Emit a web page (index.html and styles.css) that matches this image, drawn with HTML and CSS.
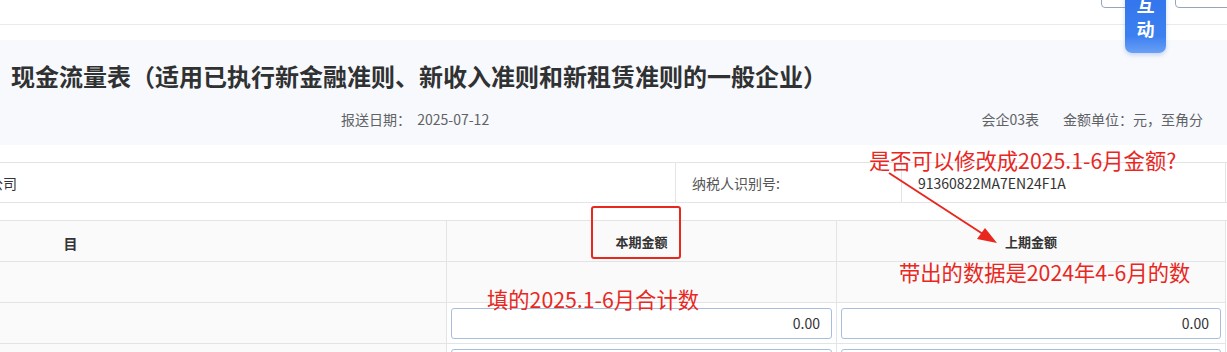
FILE: index.html
```html
<!DOCTYPE html>
<html lang="zh-CN">
<head>
  <meta charset="UTF-8">
  <title>现金流量表</title>
  <link rel="stylesheet" href="styles.css">
</head>
<body>
  <!-- 顶部工具栏 -->
  <div class="topbar">
    <div class="top-btn btn-a"></div>
    <div class="top-btn btn-b"></div>
    <div class="hudong">互<br>动</div>
  </div>

  <!-- 表头 -->
  <div class="report-head">
    <h1 class="report-title">现金流量表（适用已执行新金融准则、新收入准则和新租赁准则的一般企业）</h1>
    <div class="report-meta">
      <span class="send-date">报送日期：&nbsp;&nbsp;2025-07-12</span>
      <span class="form-no">会企03表</span>
      <span class="unit">金额单位：元，至角分</span>
    </div>
  </div>

  <div class="sheet">
    <!-- 纳税人信息 -->
    <div class="info-row">
      <div class="info-cell info-label1">纳税人名称：</div>
      <div class="info-cell info-name">有限公司</div>
      <div class="info-cell info-label2">纳税人识别号:</div>
      <div class="info-cell info-code">91360822MA7EN24F1A</div>
    </div>

    <!-- 主表 -->
    <div class="grid">
      <div class="cell head c1"><span>项</span><span>目</span></div>
      <div class="cell head c2">本期金额</div>
      <div class="cell head c3">上期金额</div>

      <div class="cell c1 shade"></div>
      <div class="cell c2 shade"></div>
      <div class="cell c3 shade"></div>

      <div class="cell c1 shade"></div>
      <div class="cell c2"><div class="amount">0.00</div></div>
      <div class="cell c3"><div class="amount">0.00</div></div>

      <div class="cell c1 shade"></div>
      <div class="cell c2"><div class="amount">0.00</div></div>
      <div class="cell c3"><div class="amount">0.00</div></div>
    </div>
  </div>

  <!-- 批注 -->
  <div class="mark-box"></div>
  <div class="note note-1">是否可以修改成2025.1-6月金额?</div>
  <div class="note note-2">填的2025.1-6月合计数</div>
  <div class="note note-3">带出的数据是2024年4-6月的数</div>
  <svg class="arrow" width="1227" height="352" viewBox="0 0 1227 352">
    <line x1="889" y1="173" x2="986" y2="236" stroke="#e8281f" stroke-width="2"/>
    <polygon points="997,243 977,239 985,228" fill="#e8281f"/>
  </svg>
</body>
</html>
```

FILE: styles.css
```css
body {
  margin: 0;
  font-family: "Noto Sans CJK SC", "Noto Sans", sans-serif;
  font-size: 14px;
  color: #333;
  background: #fff;
  overflow: hidden;
  position: relative;
  width: 1227px;
  height: 352px;
}

/* 顶部工具栏 */
.topbar {
  position: relative;
  height: 24px;
  border-bottom: 1px solid #e8eaee;
}

.top-btn {
  position: absolute;
  top: -10px;
  height: 16px;
  border: 1px solid #98a6bd;
  border-radius: 4px;
  background: #fff;
}

.btn-a {
  left: 1101px;
  width: 62px;
}

.btn-b {
  left: 1175px;
  width: 70px;
}

.hudong {
  position: absolute;
  left: 1125px;
  top: -14px;
  width: 41px;
  height: 67px;
  box-sizing: border-box;
  padding-top: 6px;
  border-radius: 0 0 7px 7px;
  background: linear-gradient(180deg, #2f72ec 0%, #3c80f0 75%, #6aa0f5 100%);
  box-shadow: 0 2px 4px rgba(40, 100, 220, 0.25);
  color: #fff;
  font-weight: bold;
  font-size: 18px;
  line-height: 24px;
  text-align: center;
}

/* 表头 */
.report-head {
  margin-top: 15px;
  background: #f7f9fc;
  padding: 20px 24px 16px 11px;
}

.report-title {
  margin: 0;
  font-size: 24px;
  line-height: 32px;
  font-weight: bold;
  color: #303133;
  white-space: nowrap;
}

.report-meta {
  display: flex;
  margin-top: 17px;
  line-height: 20px;
  color: #606266;
}

.send-date {
  margin-left: 330px;
}

.form-no {
  margin-left: auto;
}

.unit {
  margin-left: 24px;
}

/* 表体 */
.sheet {
  margin: 17px 0 0 -500px;
  width: 1727px;
}

.info-row {
  display: flex;
  height: 41px;
  box-sizing: border-box;
  border-top: 1px solid #e2e4e8;
  border-bottom: 1px solid #e2e4e8;
}

.info-cell {
  display: flex;
  align-items: center;
  padding-left: 16px;
  box-sizing: border-box;
}

.info-label1 {
  width: 445px;
}

.info-name {
  width: 731px;
  border-right: 1px solid #e2e4e8;
}

.info-label2 {
  width: 226px;
  color: #555;
  border-right: 1px solid #e2e4e8;
}

.info-code {
  width: 324px;
  border-right: 1px solid #e2e4e8;
}

.grid {
  display: grid;
  grid-template-columns: 947px 390px 389px;
  margin-top: 17px;
  border-top: 1px solid #e2e4e8;
}

.cell {
  height: 41px;
  box-sizing: border-box;
  border-bottom: 1px solid #e2e4e8;
  border-right: 1px solid #e2e4e8;
  display: flex;
  align-items: center;
  justify-content: center;
}

.head {
  background: #fafafa;
  font-size: 13px;
  font-weight: bold;
  padding-top: 4px;
}

.head.c1 {
  font-size: 14px;
  gap: 181px;
}

.shade {
  background: #fafafa;
}

.c2, .c3 {
  padding: 0 4px;
}

.amount {
  width: 100%;
  height: 31px;
  box-sizing: border-box;
  border: 1px solid #a8bedd;
  border-radius: 3px;
  background: #fff;
  text-align: right;
  padding-right: 11px;
  line-height: 29px;
}

/* 批注 */
.mark-box {
  position: absolute;
  left: 591px;
  top: 206px;
  width: 86px;
  height: 49px;
  border: 2px solid #e8281f;
  border-radius: 3px;
}

.note {
  position: absolute;
  color: #e8281f;
  font-size: 21.3px;
  line-height: 22px;
  white-space: nowrap;
}

.note-1 {
  left: 869px;
  top: 149px;
}

.note-2 {
  left: 487px;
  top: 288px;
}

.note-3 {
  left: 899px;
  top: 261px;
}

.arrow {
  position: absolute;
  left: 0;
  top: 0;
}
```
